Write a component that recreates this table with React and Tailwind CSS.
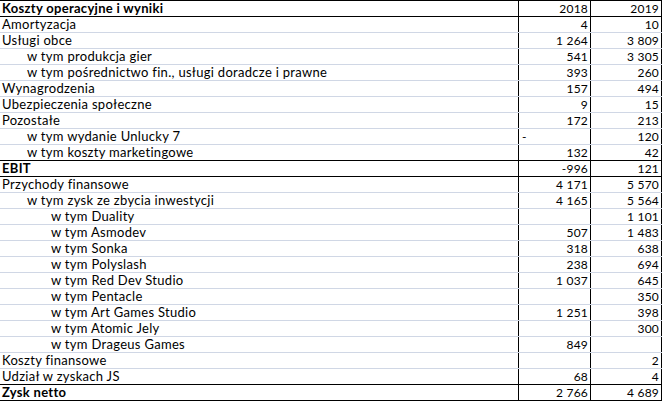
import React from 'react';

const rows = [
  { label: 'Koszty operacyjne i wyniki', a: '2018', b: '2019', bold: true, line: 'dark' },
  { label: 'Amortyzacja', a: '4', b: '10' },
  { label: 'Usługi obce', a: '1 264', b: '3 809' },
  { label: 'w tym produkcja gier', level: 1, a: '541', b: '3 305' },
  { label: 'w tym pośrednictwo fin., usługi doradcze i prawne', level: 1, a: '393', b: '260' },
  { label: 'Wynagrodzenia', a: '157', b: '494' },
  { label: 'Ubezpieczenia społeczne', a: '9', b: '15' },
  { label: 'Pozostałe', a: '172', b: '213' },
  { label: 'w tym wydanie Unlucky 7', level: 1, a: '-', dash: true, b: '120' },
  { label: 'w tym koszty marketingowe', level: 1, a: '132', b: '42', line: 'dark' },
  { label: 'EBIT', a: '-996', b: '121', bold: true, line: 'dark' },
  { label: 'Przychody finansowe', a: '4 171', b: '5 570' },
  { label: 'w tym zysk ze zbycia inwestycji', level: 1, a: '4 165', b: '5 564' },
  { label: 'w tym Duality', level: 2, a: '', b: '1 101' },
  { label: 'w tym Asmodev', level: 2, a: '507', b: '1 483' },
  { label: 'w tym Sonka', level: 2, a: '318', b: '638' },
  { label: 'w tym Polyslash', level: 2, a: '238', b: '694' },
  { label: 'w tym Red Dev Studio', level: 2, a: '1 037', b: '645' },
  { label: 'w tym Pentacle', level: 2, a: '', b: '350' },
  { label: 'w tym Art Games Studio', level: 2, a: '1 251', b: '398' },
  { label: 'w tym Atomic Jely', level: 2, a: '', b: '300' },
  { label: 'w tym Drageus Games', level: 2, a: '849', b: '' },
  { label: 'Koszty finansowe', a: '', b: '2' },
  { label: 'Udział w zyskach JS', a: '68', b: '4', line: 'dark' },
  { label: 'Zysk netto', a: '2 766', b: '4 689', bold: true, line: 'dark' },
];

const indent = ['pl-[2px]', 'pl-[27px]', 'pl-[51px]'];

export default function App() {
  return (
    <div className="w-[663px] h-[401px] bg-white text-black overflow-hidden" style={{ fontFamily: 'Lato, "Liberation Sans", sans-serif' }}>
      <div className="w-[662px] border-t border-black leading-[15px]">
        {rows.map((r, i) => {
          const line = r.line === 'dark' ? 'border-b-black' : 'border-b-[#d0d7e5]';
          return (
            <div key={i} className={`grid grid-cols-[519px_72px_71px] h-[16px] border-b ${line}`}>
              <div className={`border-r border-black whitespace-nowrap overflow-hidden text-[13px] tracking-[0.3px] ${indent[r.level || 0]} ${r.bold ? 'font-bold' : ''}`}>
                {r.label}
              </div>
              <div className={`border-r border-black pr-[2px] text-[12px] tracking-[0.2px] ${r.dash ? 'text-left pl-[3px]' : 'text-right'}`}>
                {r.a}
              </div>
              <div className="border-r border-black pr-[2px] text-[12px] tracking-[0.2px] text-right">{r.b}</div>
            </div>
          );
        })}
      </div>
    </div>
  );
}
